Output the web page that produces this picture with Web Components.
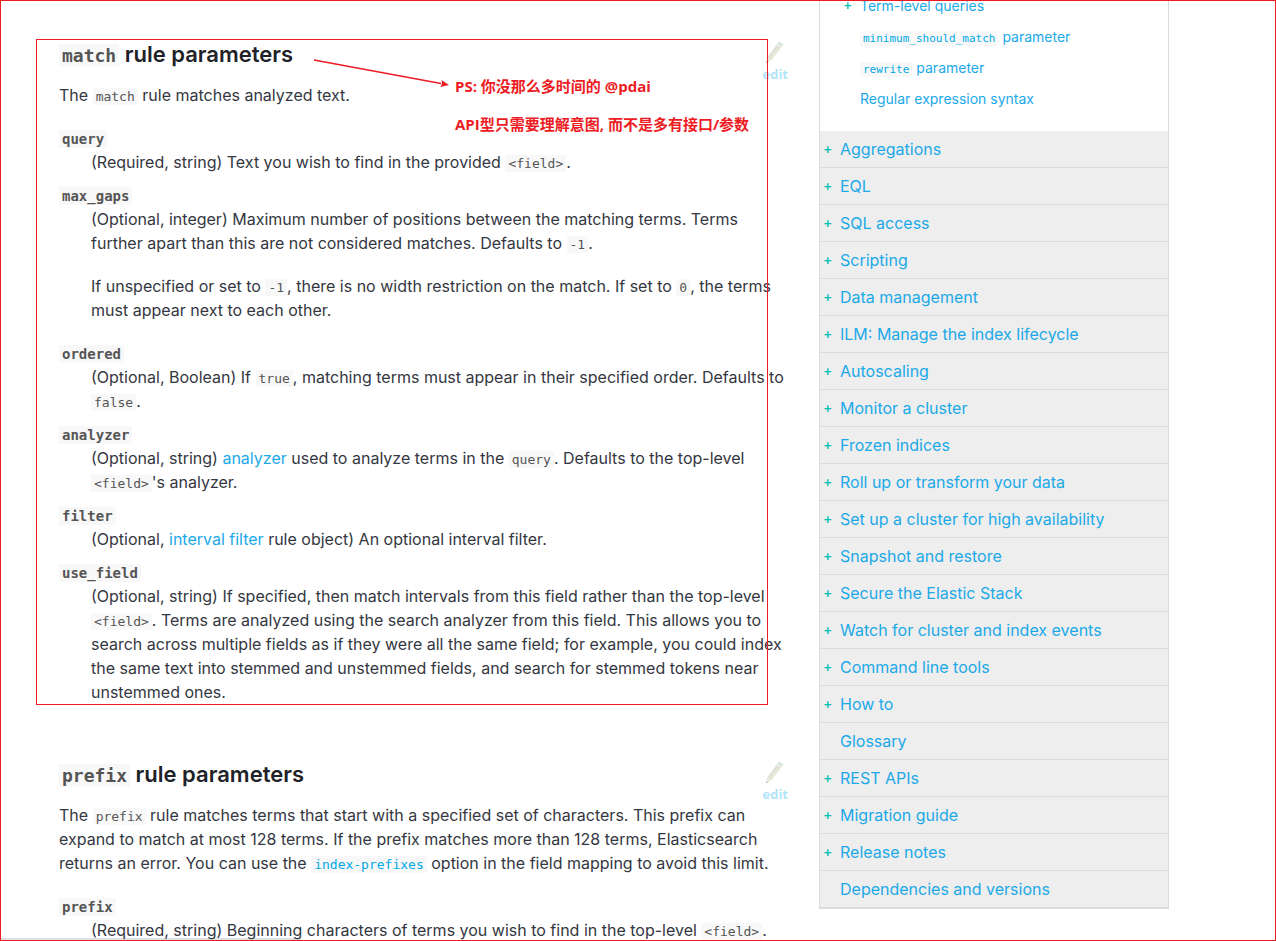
<!DOCTYPE html>
<html lang="en">
<head>
<meta charset="utf-8">
<title>Intervals query</title>
<style>
  html { height: 100%; }
  body {
    margin: 0;
    height: 100%;
    overflow: hidden;
    background: #fff;
    color: #343741;
    font-family: Inter, "Noto Sans", sans-serif;
    font-size: 16px;
    font-weight: 400;
    line-height: 24px;
  }
</style>
</head>
<body>
<doc-page>
  <doc-section>
    <span slot="title"><code-tag>match</code-tag> rule parameters</span>
    <doc-text>The <code-tag>match</code-tag> rule matches analyzed text.</doc-text>
    <param-item name="query">(Required, string) Text you wish to find in the provided <code-tag>&lt;field&gt;</code-tag>.</param-item>
    <param-item name="max_gaps" long>
      <doc-text>(Optional, integer) Maximum number of positions between the matching terms. Terms further apart than this are not considered matches. Defaults to <code-tag>-1</code-tag>.</doc-text>
      <doc-text>If unspecified or set to <code-tag>-1</code-tag>, there is no width restriction on the match. If set to <code-tag>0</code-tag>, the terms must appear next to each other.</doc-text>
    </param-item>
    <param-item name="ordered">(Optional, Boolean) If <code-tag>true</code-tag>, matching terms must appear in their specified order. Defaults to <code-tag>false</code-tag>.</param-item>
    <param-item name="analyzer">(Optional, string) <doc-link href="#analyzer">analyzer</doc-link> used to analyze terms in the <code-tag>query</code-tag>. Defaults to the top-level <code-tag>&lt;field&gt;</code-tag>'s analyzer.</param-item>
    <param-item name="filter">(Optional, <doc-link href="#interval_filter">interval filter</doc-link> rule object) An optional interval filter.</param-item>
    <param-item name="use_field">(Optional, string) If specified, then match intervals from this field rather than the top-level <code-tag>&lt;field&gt;</code-tag>. Terms are analyzed using the search analyzer from this field. This allows you to search across multiple fields as if they were all the same field; for example, you could index the same text into stemmed and unstemmed fields, and search for stemmed tokens near unstemmed ones.</param-item>
    <review-note slot="note">
      <span slot="first">PS: 你没那么多时间的 @pdai</span>
      <span slot="second">API型只需要理解意图, 而不是多有接口/参数</span>
    </review-note>
  </doc-section>

  <doc-section>
    <span slot="title"><code-tag>prefix</code-tag> rule parameters</span>
    <doc-text>The <code-tag>prefix</code-tag> rule matches terms that start with a specified set of characters. This prefix can expand to match at most 128 terms. If the prefix matches more than 128 terms, Elasticsearch returns an error. You can use the <doc-link href="#index-prefixes"><code-tag link>index-prefixes</code-tag></doc-link> option in the field mapping to avoid this limit.</doc-text>
    <param-item name="prefix">(Required, string) Beginning characters of terms you wish to find in the top-level <code-tag>&lt;field&gt;</code-tag>.</param-item>
  </doc-section>

  <toc-list slot="side">
    <toc-item slot="open" sub expandable>Term-level queries</toc-item>
    <toc-item slot="open" sub><code-tag link small>minimum_should_match</code-tag> parameter</toc-item>
    <toc-item slot="open" sub><code-tag link small>rewrite</code-tag> parameter</toc-item>
    <toc-item slot="open" sub>Regular expression syntax</toc-item>
    <toc-item expandable>Aggregations</toc-item>
    <toc-item expandable>EQL</toc-item>
    <toc-item expandable>SQL access</toc-item>
    <toc-item expandable>Scripting</toc-item>
    <toc-item expandable>Data management</toc-item>
    <toc-item expandable>ILM: Manage the index lifecycle</toc-item>
    <toc-item expandable>Autoscaling</toc-item>
    <toc-item expandable>Monitor a cluster</toc-item>
    <toc-item expandable>Frozen indices</toc-item>
    <toc-item expandable>Roll up or transform your data</toc-item>
    <toc-item expandable>Set up a cluster for high availability</toc-item>
    <toc-item expandable>Snapshot and restore</toc-item>
    <toc-item expandable>Secure the Elastic Stack</toc-item>
    <toc-item expandable>Watch for cluster and index events</toc-item>
    <toc-item expandable>Command line tools</toc-item>
    <toc-item expandable>How to</toc-item>
    <toc-item>Glossary</toc-item>
    <toc-item expandable>REST APIs</toc-item>
    <toc-item expandable>Migration guide</toc-item>
    <toc-item expandable>Release notes</toc-item>
    <toc-item>Dependencies and versions</toc-item>
  </toc-list>
</doc-page>

<script>
/**
 * Base class, puts the markup of the subclass in an open shadow root.
 * The markup is trimmed, so inline elements get no space after them.
 */
class DocElement extends HTMLElement {
  constructor() {
    super();
    this.attachShadow({ mode: "open" });
  }

  connectedCallback() {
    this.shadowRoot.innerHTML = this.render().trim();
  }
}

/**
 * Two column page with a thin red frame over the window edge
 */
class DocPage extends DocElement {
  render() {
    return `
      <style>
        :host {
          display: block;
          position: relative;
          isolation: isolate;
          height: 100%;
          overflow: hidden;
        }

        .columns {
          display: grid;
          grid-template-columns: minmax(0, 1fr) 350px;
          gap: 30px;
          align-items: start;
          padding: 0 107px 0 59px;
        }

        main {
          display: grid;
          gap: 56px;
          padding-top: 40px;
        }

        .frame {
          position: absolute;
          inset: 0;
          border: 1px solid #ed1c24;
          pointer-events: none;
        }

        .status {
          position: absolute;
          z-index: -1;
          left: 1px;
          bottom: 1px;
          width: 300px;
          height: 2px;
          background: #dee1e6;
        }
      </style>
      <div class="columns">
        <main><slot></slot></main>
        <slot name="side"></slot>
      </div>
      <div class="status"></div>
      <div class="frame"></div>
    `;
  }
}

class DocSection extends DocElement {
  render() {
    return `
      <style>
        :host {
          display: block;
          position: relative;
        }

        h3 {
          margin: 0 0 15px;
          color: #212227;
          font-size: 22px;
          font-weight: 600;
          line-height: 28px;
          --code-size: 18px;
          --code-weight: 700;
        }

        .edit {
          position: absolute;
          top: 0;
          right: 1px;
          display: flex;
          flex-direction: column;
          align-items: center;
          color: #b2e5f7;
          font: bold 13px/18px "Open Sans", sans-serif;
          text-decoration: none;
        }
      </style>
      <h3><slot name="title"></slot></h3>
      <a class="edit" href="#edit">
        <svg width="22" height="25" viewBox="0 0 22 25" aria-hidden="true">
          <path d="M2 23.500 3.200 17.200 7.400 20.200z" fill="#efe9dc"/>
          <path d="M3.200 17.200 12.600 4.600l4.400 3.200L7.400 20.200z" fill="#e6e6d8"/>
          <path d="M4.600 18 14 5.600" stroke="#cfe0dc" fill="none"/>
          <path d="M6.200 19.200 15.800 6.800" stroke="#f1e6cc" fill="none"/>
          <path d="M12.600 4.600 15 1.400 19.400 4.600 17 7.800z" fill="#d3e0db"/>
          <path d="M13.300 3.800l4.300 3.200" stroke="#fff" fill="none"/>
          <path d="M2 23.500l.5-2.500 1.600 1.200z" fill="#b4c0c4"/>
        </svg>
        edit
      </a>
      <slot></slot>
      <slot name="note"></slot>
    `;
  }
}

class DocText extends DocElement {
  render() {
    return `
      <style>
        :host { display: block; margin-bottom: 19px; }
        p { margin: 0; }
      </style>
      <p><slot></slot></p>
    `;
  }
}

/**
 * Parameter name with its description indented below
 */
class ParamItem extends DocElement {
  render() {
    return `
      <style>
        :host { display: block; margin-bottom: 9px; }
        :host(:last-of-type) { margin-bottom: 0; }
        :host([long]) { margin-bottom: 0; }

        dl { margin: 0; }

        dt {
          --code-size: 14px;
          --code-weight: 700;
        }

        dd { margin: 0 0 0 32px; }
      </style>
      <dl>
        <dt><code-tag>${this.getAttribute("name")}</code-tag></dt>
        <dd><slot></slot></dd>
      </dl>
    `;
  }
}

class CodeTag extends DocElement {
  render() {
    return `
      <style>
        code {
          padding: 1px 3px;
          background: #f8f8f8;
          color: #555;
          font-family: "DejaVu Sans Mono", monospace;
          font-size: var(--code-size, 13px);
          font-weight: var(--code-weight, 400);
          line-height: 1;
        }

        :host([link]) code { color: #00a9e5; }
        :host([small]) code { font-size: 11px; }
      </style>
      <code><slot></slot></code>
    `;
  }
}

class DocLink extends DocElement {
  render() {
    return `
      <style>
        a { color: #1ba9e8; text-decoration: none; }
      </style>
      <a href="${this.getAttribute("href")}"><slot></slot></a>
    `;
  }
}

/**
 * Red box round a section, with an arrow from its heading to two remarks
 */
class ReviewNote extends DocElement {
  render() {
    return `
      <style>
        :host {
          position: absolute;
          inset: -1px 21px -1px -23px;
          border: 1px solid #ed1c24;
          pointer-events: none;
        }

        svg {
          position: absolute;
          left: 276px;
          top: 17px;
        }

        .remarks {
          position: absolute;
          left: 418px;
          top: 27px;
          display: grid;
          color: #ed1c24;
          font: bold 15px/38px "Open Sans", "Noto Sans CJK SC", sans-serif;
          white-space: nowrap;
        }
      </style>
      <svg width="138" height="34" viewBox="0 0 138 34" aria-hidden="true">
        <path d="M1 3 128 26.500" stroke="#ed1c24" stroke-width="1.500" fill="none"/>
        <path d="M136 28 127.500 30 129 26.500 128.500 23z" fill="#ed1c24"/>
      </svg>
      <div class="remarks">
        <slot name="first"></slot>
        <slot name="second"></slot>
      </div>
    `;
  }
}

class TocList extends DocElement {
  render() {
    return `
      <style>
        :host {
          display: block;
          box-sizing: border-box;
          margin-top: -10px;
          border: 1px solid #dcdcdc;
          border-top: 0;
        }

        .open { padding-bottom: 17px; }
      </style>
      <nav>
        <div class="open"><slot name="open"></slot></div>
        <slot></slot>
      </nav>
    `;
  }
}

class TocItem extends DocElement {
  render() {
    const toggle = this.hasAttribute("expandable")
      ? `<button type="button" aria-label="Expand">+</button>`
      : "";

    return `
      <style>
        :host {
          display: grid;
          grid-template-columns: 20px 1fr;
          border-bottom: 1px solid #dcdcdc;
          background: #eee;
          line-height: 36px;
        }

        :host([sub]) {
          padding-left: 20px;
          border: 0;
          background: none;
          font-size: 14px;
          line-height: 31px;
        }

        button {
          grid-column: 1;
          padding: 0 0 2px 3px;
          border: 0;
          background: none;
          color: #00bfb3;
          font: 500 14px Inter, sans-serif;
          text-align: left;
        }

        a {
          grid-column: 2;
          color: #1ba9e8;
          text-decoration: none;
        }
      </style>
      ${toggle}
      <a href="#toc"><slot></slot></a>
    `;
  }
}

customElements.define("doc-page", DocPage);
customElements.define("doc-section", DocSection);
customElements.define("doc-text", DocText);
customElements.define("param-item", ParamItem);
customElements.define("code-tag", CodeTag);
customElements.define("doc-link", DocLink);
customElements.define("review-note", ReviewNote);
customElements.define("toc-list", TocList);
customElements.define("toc-item", TocItem);
</script>
</body>
</html>
